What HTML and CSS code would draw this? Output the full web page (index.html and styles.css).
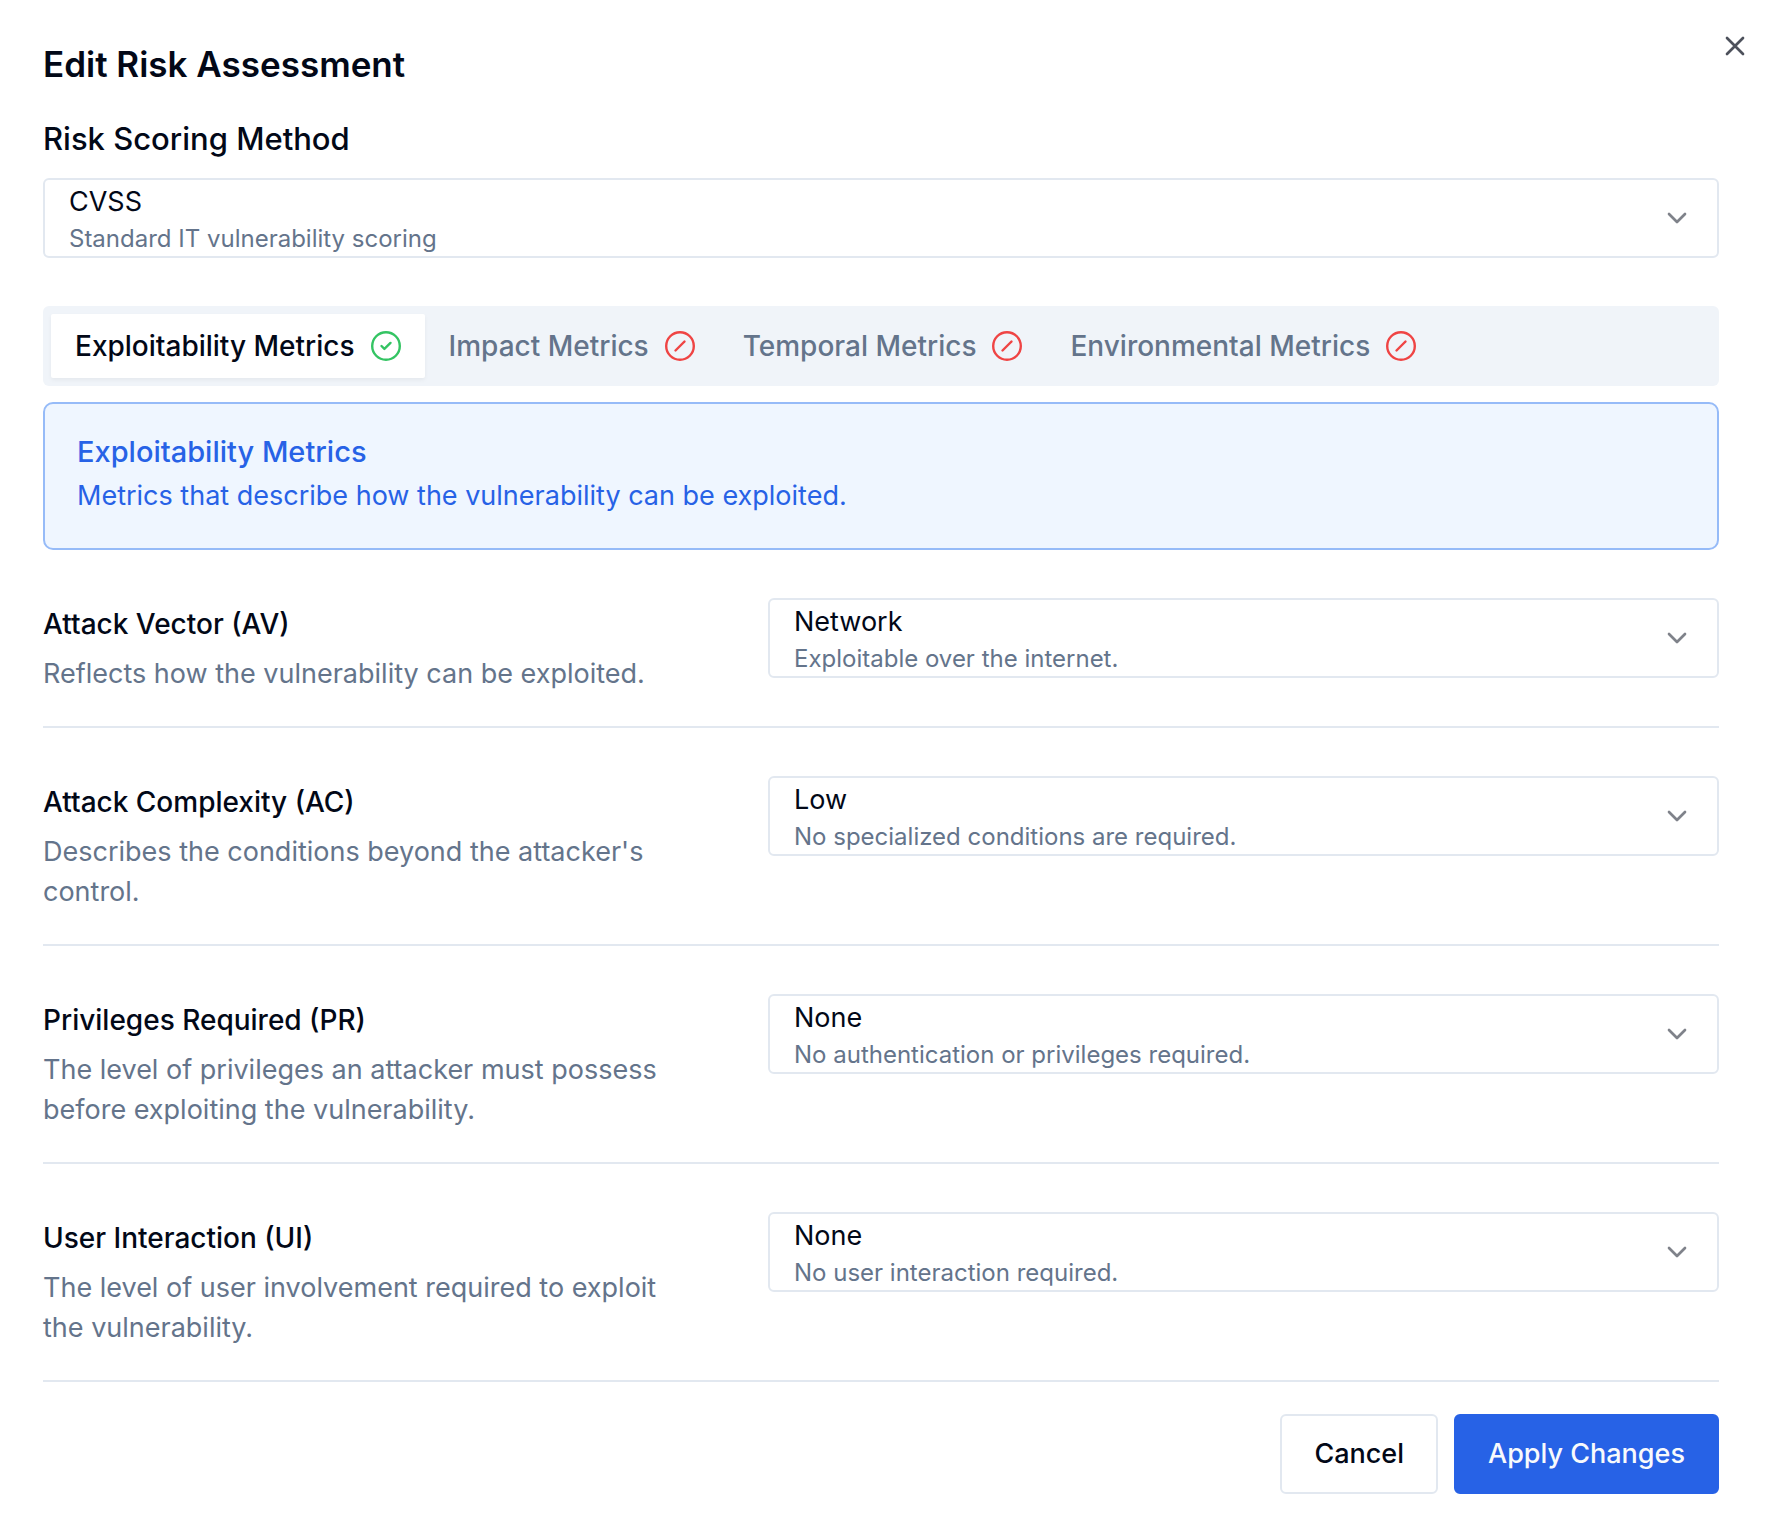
FILE: index.html
```html
<!DOCTYPE html>
<html lang="en">
<head>
  <meta charset="utf-8">
  <meta name="viewport" content="width=device-width, initial-scale=1">
  <title>Edit Risk Assessment</title>
  <link rel="stylesheet" href="styles.css">
</head>
<body>
  <svg class="sprite" aria-hidden="true">
    <symbol id="chevron" viewBox="0 0 24 24"><path d="m6 9 6 6 6-6"/></symbol>
    <symbol id="slashed" viewBox="0 0 30 30"><circle cx="15" cy="15" r="13.8"/><path d="m10.5 19.5 9-9"/></symbol>
  </svg>
  <main class="dialog" role="dialog" aria-labelledby="dialog-title">
    <button class="close" type="button" aria-label="Close">
      <svg class="icon" viewBox="0 0 24 24"><path d="M18 6 6 18M6 6l12 12"/></svg>
    </button>
    <h1 class="title" id="dialog-title">Edit Risk Assessment</h1>
    <form class="form">
      <label class="method-label" for="method">Risk Scoring Method</label>
      <div class="picker">
        <select class="picker-select" id="method" aria-describedby="method-note"><option>CVSS</option></select>
        <span class="picker-note" id="method-note">Standard IT vulnerability scoring</span>
        <svg class="icon picker-chevron"><use href="#chevron"/></svg>
      </div>

      <div class="tabs" role="tablist">
        <button class="tab tab-active" type="button" role="tab" aria-selected="true">Exploitability Metrics
          <svg class="status status-done" viewBox="0 0 30 30"><circle cx="15" cy="15" r="13.8"/><path d="m10.5 15 2.9 2.9 6.1-6"/></svg>
        </button>
        <button class="tab" type="button" role="tab" aria-selected="false">Impact Metrics
          <svg class="status"><use href="#slashed"/></svg>
        </button>
        <button class="tab" type="button" role="tab" aria-selected="false">Temporal Metrics
          <svg class="status"><use href="#slashed"/></svg>
        </button>
        <button class="tab" type="button" role="tab" aria-selected="false">Environmental Metrics
          <svg class="status"><use href="#slashed"/></svg>
        </button>
      </div>

      <section class="notice">
        <h2 class="notice-title">Exploitability Metrics</h2>
        <p class="notice-text">Metrics that describe how the vulnerability can be exploited.</p>
      </section>

      <div class="metric">
        <div class="metric-info">
          <label class="metric-label" for="av">Attack Vector (AV)</label>
          <p class="metric-text">Reflects how the vulnerability can be exploited.</p>
        </div>
        <div class="picker">
          <select class="picker-select" id="av" aria-describedby="av-note"><option>Network</option></select>
          <span class="picker-note" id="av-note">Exploitable over the internet.</span>
          <svg class="icon picker-chevron"><use href="#chevron"/></svg>
        </div>
      </div>
      <div class="metric">
        <div class="metric-info">
          <label class="metric-label" for="ac">Attack Complexity (AC)</label>
          <p class="metric-text">Describes the conditions beyond the attacker's control.</p>
        </div>
        <div class="picker">
          <select class="picker-select" id="ac" aria-describedby="ac-note"><option>Low</option></select>
          <span class="picker-note" id="ac-note">No specialized conditions are required.</span>
          <svg class="icon picker-chevron"><use href="#chevron"/></svg>
        </div>
      </div>
      <div class="metric">
        <div class="metric-info">
          <label class="metric-label" for="pr">Privileges Required (PR)</label>
          <p class="metric-text">The level of privileges an attacker must possess before exploiting the vulnerability.</p>
        </div>
        <div class="picker">
          <select class="picker-select" id="pr" aria-describedby="pr-note"><option>None</option></select>
          <span class="picker-note" id="pr-note">No authentication or privileges required.</span>
          <svg class="icon picker-chevron"><use href="#chevron"/></svg>
        </div>
      </div>
      <div class="metric">
        <div class="metric-info">
          <label class="metric-label" for="ui">User Interaction (UI)</label>
          <p class="metric-text">The level of user involvement required to exploit the vulnerability.</p>
        </div>
        <div class="picker">
          <select class="picker-select" id="ui" aria-describedby="ui-note"><option>None</option></select>
          <span class="picker-note" id="ui-note">No user interaction required.</span>
          <svg class="icon picker-chevron"><use href="#chevron"/></svg>
        </div>
      </div>

      <div class="actions">
        <button class="button" type="button">Cancel</button>
        <button class="button button-primary" type="submit">Apply Changes</button>
      </div>
    </form>
  </main>
</body>
</html>
```
FILE: styles.css
```css
:root {
  --ink: #020817;
  --muted: #64748b;
  --line: #e2e8f0;
  --blue: #2762e6;
}

*, *::before, *::after { box-sizing: border-box; }

body {
  margin: 0;
  background: #fff;
  color: var(--ink);
  font-family: Inter, "Liberation Sans", sans-serif;
  font-size: 27px;
  line-height: 40px;
}

h1, h2, p { margin: 0; }

button, select { font: inherit; color: inherit; cursor: pointer; }

.sprite { position: absolute; width: 0; height: 0; }

.dialog {
  position: relative;
  padding: 46px 59px 44px 43px;
}

.icon {
  width: 32px;
  height: 32px;
  fill: none;
  stroke: currentColor;
  stroke-width: 2;
  stroke-linecap: round;
  stroke-linejoin: round;
}

.close {
  position: absolute;
  top: 30px;
  right: 27px;
  display: flex;
  padding: 0;
  border: 0;
  background: none;
  opacity: 0.7;
}

.title {
  font-size: 35px;
  font-weight: 600;
  line-height: 36px;
}

.form { display: flex; flex-direction: column; }

.method-label {
  margin: 37px 0 19px;
  font-size: 31px;
  font-weight: 500;
}

/* Drop-down with a second, descriptive line */
.picker {
  display: grid;
  grid-template: 42px 38px / minmax(0, 1fr) auto;
  align-self: start;
  width: 100%;
}

.picker-select {
  grid-area: 1 / 1 / 3 / 3;
  width: 100%;
  padding: 2px 24px 34px;
  border: 2px solid var(--line);
  border-radius: 6px;
  background: #fff;
  appearance: none;
}

.picker-note {
  grid-area: 2 / 1;
  z-index: 1;
  padding: 3px 0 0 26px;
  color: var(--muted);
  font-size: 24px;
  line-height: 32px;
  pointer-events: none;
}

.picker-chevron {
  grid-area: 1 / 2 / 3 / 3;
  z-index: 1;
  align-self: center;
  margin-right: 26px;
  opacity: 0.5;
  pointer-events: none;
}

.tabs {
  display: flex;
  margin: 48px 0 16px;
  padding: 8px;
  border-radius: 6px;
  background: #f0f4f9;
}

.tab {
  display: flex;
  align-items: center;
  gap: 16px;
  padding: 12px 24px;
  border: 0;
  border-radius: 2px;
  background: none;
  color: var(--muted);
  font-size: 28px;
  font-weight: 500;
  white-space: nowrap;
}

.tab-active {
  background: #fff;
  color: var(--ink);
  box-shadow: 0 2px 4px rgb(0 0 0 / 5%);
}

.status {
  width: 30px;
  height: 30px;
  fill: none;
  stroke: #ef4444;
  stroke-width: 2.4;
  stroke-linecap: round;
  stroke-linejoin: round;
}

.status-done { stroke: #34c463; }

.notice {
  padding: 32px;
  border: 2px solid #96bbf8;
  border-radius: 10px;
  background: #eff6ff;
  color: var(--blue);
}

.notice-title {
  margin-bottom: 8px;
  font-size: 29px;
  font-weight: 500;
  line-height: 32px;
}

.metric {
  display: grid;
  grid-template-columns: repeat(12, minmax(0, 1fr));
  column-gap: 64px;
  padding: 48px 0 0;
  border-bottom: 2px solid var(--line);
}

.metric-info {
  grid-column: span 5;
  padding: 12px 0 32px;
}

.metric-label {
  display: block;
  margin-bottom: 16px;
  font-size: 28px;
  font-weight: 500;
  line-height: 28px;
}

.metric-text { color: var(--muted); }

.metric .picker { grid-column: span 7; }

.actions {
  display: flex;
  justify-content: flex-end;
  gap: 16px;
  margin-top: 32px;
}

.button {
  padding: 18px 32px;
  border: 2px solid var(--line);
  border-radius: 6px;
  background: #fff;
  font-weight: 500;
}

.button-primary {
  border-color: var(--blue);
  background: var(--blue);
  color: #f8fafc;
}
```
